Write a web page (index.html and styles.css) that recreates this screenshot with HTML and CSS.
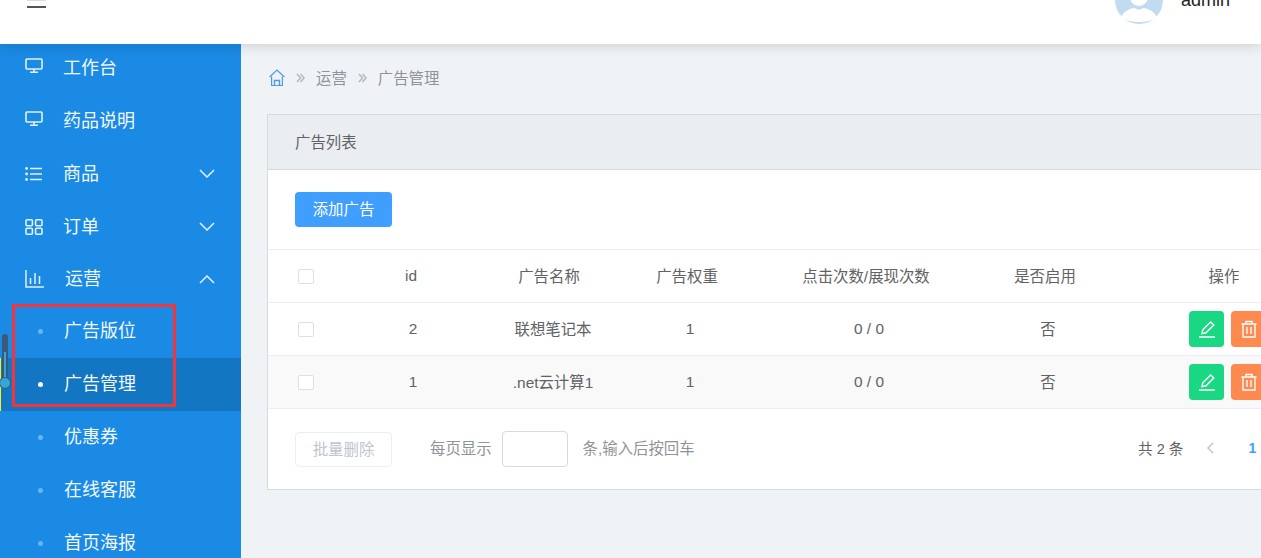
FILE: index.html
```html
<!DOCTYPE html>
<html lang="zh-CN">
<head>
<meta charset="utf-8">
<title>广告管理</title>
<link rel="stylesheet" href="styles.css">
</head>
<body>
<header class="topbar">
  <div class="hamburger"></div>
  <div class="user">
    <svg class="avatar" viewBox="0 0 48 24" width="48" height="24">
      <circle cx="24" cy="0" r="24" fill="#c3dbf0"/>
      <circle cx="24" cy="-3" r="9" fill="#fff"/>
      <path d="M6 17 C9 11 16 8 20 8 C22 10 26 10 28 8 C32 8 39 11 42 17 C37 21 30 22 24 22 C18 22 11 21 6 17Z" fill="#fff"/>
    </svg>
    <span class="username">admin</span>
  </div>
</header>
<div class="layout">
  <nav class="sidebar">
    <ul class="menu">
      <li class="item">
        <svg class="icon icon-up" viewBox="0 0 18 16"><rect x="1" y="1" width="16" height="10" rx="1" fill="none" stroke="currentColor" stroke-width="1.6"/><path d="M9 11v3M5 14.2h8" stroke="currentColor" stroke-width="1.6" fill="none"/></svg>
        <span class="text">工作台</span>
      </li>
      <li class="item">
        <svg class="icon icon-up" viewBox="0 0 18 16"><rect x="1" y="1" width="16" height="10" rx="1" fill="none" stroke="currentColor" stroke-width="1.6"/><path d="M9 11v3M5 14.2h8" stroke="currentColor" stroke-width="1.6" fill="none"/></svg>
        <span class="text">药品说明</span>
      </li>
      <li class="item">
        <svg class="icon" viewBox="0 0 18 16"><path d="M5 2.5h12M5 8h12M5 13.5h12" stroke="currentColor" stroke-width="1.5" fill="none"/><circle cx="1.6" cy="2.5" r="1.4" fill="currentColor"/><circle cx="1.6" cy="8" r="1.4" fill="currentColor"/><circle cx="1.6" cy="13.5" r="1.4" fill="currentColor"/></svg>
        <span class="text">商品</span>
        <svg class="chevron" viewBox="0 0 16 9"><path d="M1 1l7 7 7-7" fill="none" stroke="currentColor" stroke-width="1.5"/></svg>
      </li>
      <li class="item">
        <svg class="icon" viewBox="0 0 18 16"><g fill="none" stroke="currentColor" stroke-width="1.6"><rect x="1" y="0.8" width="6.4" height="6" rx="1"/><rect x="10.6" y="0.8" width="6.4" height="6" rx="1"/><rect x="1" y="9.2" width="6.4" height="6" rx="1"/><rect x="10.6" y="9.2" width="6.4" height="6" rx="1"/></g></svg>
        <span class="text">订单</span>
        <svg class="chevron" viewBox="0 0 16 9"><path d="M1 1l7 7 7-7" fill="none" stroke="currentColor" stroke-width="1.5"/></svg>
      </li>
      <li class="item item-open">
        <svg class="icon icon-chart" viewBox="0 0 19 18"><path d="M1 0v17h18M5.5 8v6M10 3v11M14.5 6v8" fill="none" stroke="currentColor" stroke-width="1.5"/></svg>
        <span class="text">运营</span>
        <svg class="chevron" viewBox="0 0 16 9"><path d="M1 8l7-7 7 7" fill="none" stroke="currentColor" stroke-width="1.5"/></svg>
      </li>
      <li class="subitem"><i class="dot"></i><span class="text">广告版位</span></li>
      <li class="subitem is-active"><i class="dot"></i><span class="text">广告管理</span></li>
      <li class="subitem"><i class="dot"></i><span class="text">优惠券</span></li>
      <li class="subitem"><i class="dot"></i><span class="text">在线客服</span></li>
      <li class="subitem"><i class="dot"></i><span class="text">首页海报</span></li>
    </ul>
    <div class="annotation"></div>
    <div class="gauge"><div class="gauge-fill"></div><div class="gauge-bulb"></div></div>
  </nav>
  <main class="main">
    <div class="crumbs">
      <svg class="home" viewBox="0 0 16 17" width="16" height="17"><path d="M0.6 8L8 1l7.4 7" fill="none" stroke="#4a9be8" stroke-width="1.2"/><path d="M2.6 7.5v9h10.8v-9" fill="none" stroke="#4a9be8" stroke-width="1.2"/><path d="M5.5 16v-4.5h5V16" fill="none" stroke="#4a9be8" stroke-width="1.4"/></svg>
      <svg class="sep" viewBox="0 0 9 10" width="9" height="10"><path d="M1 1l3.5 4L1 9M4.5 1L8 5 4.5 9" fill="none" stroke="#b4b8be" stroke-width="1.5"/></svg>
      <span class="crumb">运营</span>
      <svg class="sep" viewBox="0 0 9 10" width="9" height="10"><path d="M1 1l3.5 4L1 9M4.5 1L8 5 4.5 9" fill="none" stroke="#b4b8be" stroke-width="1.5"/></svg>
      <span class="crumb">广告管理</span>
    </div>
    <section class="card">
      <div class="card-head">广告列表</div>
      <div class="toolbar"><button class="btn-add"><span class="btn-text">添加广告</span></button></div>
      <div class="row row-head">
        <div><span class="check"></span></div>
        <div class="num">id</div><div class="cell">广告名称</div><div class="cell">广告权重</div><div class="cell">点击次数/展现次数</div><div class="cell">是否启用</div><div class="cell">操作</div>
      </div>
      <div class="row row-body">
        <div><span class="check"></span></div>
        <div class="num">2</div><div class="cell">联想笔记本</div><div class="num">1</div><div class="num">0 / 0</div><div class="cell">否</div>
        <div class="ops">
          <button class="op op-edit"><svg viewBox="0 0 18 18" width="18" height="18"><path d="M1 17h16M4 13.6l.8-3.8L12.6 2l3.2 3-7.8 7.8z" fill="none" stroke="#fff" stroke-width="1.4"/></svg></button>
          <button class="op op-del"><svg viewBox="0 0 18 18" width="18" height="18"><path d="M1.5 4h15M6 4V1.5h6V4M3 4v13h12V4M7 7v7M11 7v7" fill="none" stroke="#fff" stroke-width="1.4"/></svg></button>
        </div>
      </div>
      <div class="row row-body row-alt">
        <div><span class="check"></span></div>
        <div class="num">1</div><div class="cell">.net云计算1</div><div class="num">1</div><div class="num">0 / 0</div><div class="cell">否</div>
        <div class="ops">
          <button class="op op-edit"><svg viewBox="0 0 18 18" width="18" height="18"><path d="M1 17h16M4 13.6l.8-3.8L12.6 2l3.2 3-7.8 7.8z" fill="none" stroke="#fff" stroke-width="1.4"/></svg></button>
          <button class="op op-del"><svg viewBox="0 0 18 18" width="18" height="18"><path d="M1.5 4h15M6 4V1.5h6V4M3 4v13h12V4M7 7v7M11 7v7" fill="none" stroke="#fff" stroke-width="1.4"/></svg></button>
        </div>
      </div>
      <div class="footer">
        <button class="btn-batch"><span class="btn-text">批量删除</span></button>
        <span class="label">每页显示</span>
        <input class="size-input" type="text">
        <span class="label-tail">条,输入后按回车</span>
        <div class="pager">
          <span class="total">共 2 条</span>
          <svg class="prev" viewBox="0 0 8 12" width="8" height="12"><path d="M7 1L2 6l5 5" fill="none" stroke="#c0c4cc" stroke-width="1.5"/></svg>
          <span class="page">1</span>
        </div>
      </div>
    </section>
  </main>
</div>
</body>
</html>
```
FILE: styles.css
```css
* { box-sizing: border-box; }
html, body { margin: 0; height: 100%; overflow: hidden; }
body {
  display: flex;
  flex-direction: column;
  font-family: "Liberation Sans", "Noto Sans CJK SC", sans-serif;
  background: #eff3f6;
}
ul { list-style: none; margin: 0; padding: 0; }
button { font-family: inherit; }

.topbar {
  position: relative;
  z-index: 5;
  flex: 0 0 44px;
  display: flex;
  justify-content: space-between;
  overflow: hidden;
  background: #fff;
  box-shadow: 0 2px 12px rgba(0, 0, 0, .14);
}
.hamburger {
  width: 19px;
  height: 8px;
  margin-left: 27px;
  border-top: 1px solid #ddd;
  border-bottom: 2px solid #555;
}
.user { display: flex; align-items: flex-start; width: 146px; }
.avatar { display: block; }
.username { margin: -10px 0 0 18px; font-size: 18px; line-height: 21px; color: #222; }

.layout { flex: 1; display: flex; min-height: 0; }

.sidebar {
  position: relative;
  flex: 0 0 241px;
  overflow: hidden;
  background: #1a8ae4;
  color: #fff;
}
.menu { margin-top: -3px; }
.item, .subitem {
  display: flex;
  align-items: center;
  height: 53px;
  font-size: 18px;
  color: #f2f8fe;
}
.text { padding-bottom: 4px; }
.item { padding-left: 25px; }
.item-open { height: 52px; }
.icon { width: 18px; height: 16px; margin-right: 20px; flex: none; color: #e4f1fc; }
.icon-up { margin-bottom: 3px; }
.icon-chart { width: 19px; height: 18px; margin-right: 21px; }
.chevron { width: 16px; height: 9px; margin-left: auto; margin-right: 26px; color: #e4f1fc; }
.subitem { padding-left: 38px; }
.subitem .text { padding-bottom: 5px; }
.dot { width: 5px; height: 5px; margin-right: 21px; border-radius: 50%; background: #66b5fb; }
.is-active { background: #1376c2; border-left: 1px solid #f5f02a; padding-left: 37px; }
.is-active .dot { background: #fff; }

.annotation {
  position: absolute;
  left: 12px;
  top: 260px;
  width: 164px;
  height: 103px;
  border: 3px solid #f5333b;
}
.gauge {
  position: absolute;
  left: 2px;
  top: 290px;
  width: 6px;
  height: 50px;
  border-radius: 3px;
  background: #3c5a78;
}
.gauge-fill { position: absolute; left: 2px; top: 18px; width: 2px; height: 30px; background: #35a6d8; }
.gauge-bulb {
  position: absolute;
  left: -2px;
  top: 44px;
  width: 10px;
  height: 10px;
  border-radius: 50%;
  background: #35a6d8;
  box-shadow: 0 0 0 1px #3c5a78;
}

.main { flex: 1; min-width: 0; overflow: hidden; padding: 0 0 0 26px; }
.crumbs {
  display: flex;
  align-items: center;
  height: 70px;
  font-size: 15.4px;
  color: #909399;
  gap: 11px;
}
.crumb { padding-bottom: 4px; }
.home { flex: none; margin: 0 0 4px 2px; }
.sep { flex: none; margin-bottom: 3px; }

.card {
  width: 1100px;
  border: 1px solid #d5dbdf;
  background: #fff;
}
.card-head {
  height: 55px;
  padding-left: 27px;
  line-height: 55px;
  font-size: 15.4px;
  color: #606266;
  background: #ebeef1;
  border-bottom: 1px solid #d5dbdf;
}
.toolbar { height: 79px; padding: 22px 0 0 27px; }
.btn-add {
  width: 97px;
  height: 35px;
  padding: 0;
  border: 0;
  border-radius: 4px;
  font-size: 15.4px;
  color: #fff;
  background: #409eff;
}
.btn-text { display: block; padding-bottom: 3px; }

.row {
  display: grid;
  align-items: center;
  text-align: center;
  height: 53px;
  font-size: 15.4px;
  color: #606266;
  border-top: 1px solid #ebeef5;
}
.cell { padding-bottom: 3px; }
.num { line-height: 18px; }
.row-head { grid-template-columns: 76px 134px 142px 134px 224px 134px 224px; }
.row-body { grid-template-columns: 76px 138px 142px 132px 226px 132px 1fr; }
.row-alt { background: #f9f9f9; border-bottom: 1px solid #ebeef5; height: 54px; }
.check {
  display: block;
  width: 16px;
  height: 15px;
  margin: 0 auto;
  border: 1px solid #dcdfe6;
  border-radius: 2px;
  background: #fff;
}
.ops { display: flex; gap: 7px; padding-left: 75px; }
.op {
  display: flex;
  align-items: center;
  justify-content: center;
  width: 35px;
  height: 36px;
  padding: 0;
  border: 0;
  border-radius: 4px;
}
.op-edit { background: #19d782; }
.op-del { background: #ff8a4f; }

.footer {
  display: flex;
  align-items: center;
  height: 80px;
  padding-left: 27px;
  font-size: 15.4px;
  color: #909399;
}
.btn-batch {
  width: 97px;
  height: 35px;
  padding: 0;
  border: 1px solid #ebeef5;
  border-radius: 4px;
  background: #fff;
  font-size: 15.4px;
  color: #c0c4cc;
}
.label, .label-tail { padding-bottom: 4px; }
.label { margin-left: 38px; }
.size-input {
  width: 66px;
  height: 36px;
  margin-left: 10px;
  border: 1px solid #d6dae4;
  border-radius: 4px;
  background: #fff;
}
.label-tail { margin-left: 15px; }
.pager {
  display: flex;
  align-items: center;
  margin-left: auto;
  width: 228px;
  color: #606266;
}
.total { font-size: 14.6px; padding-bottom: 4px; }
.prev { margin-left: 23px; margin-bottom: 3px; }
.page { margin-left: 34px; font-size: 14px; font-weight: 700; color: #409eff; padding-bottom: 3px; }
```
